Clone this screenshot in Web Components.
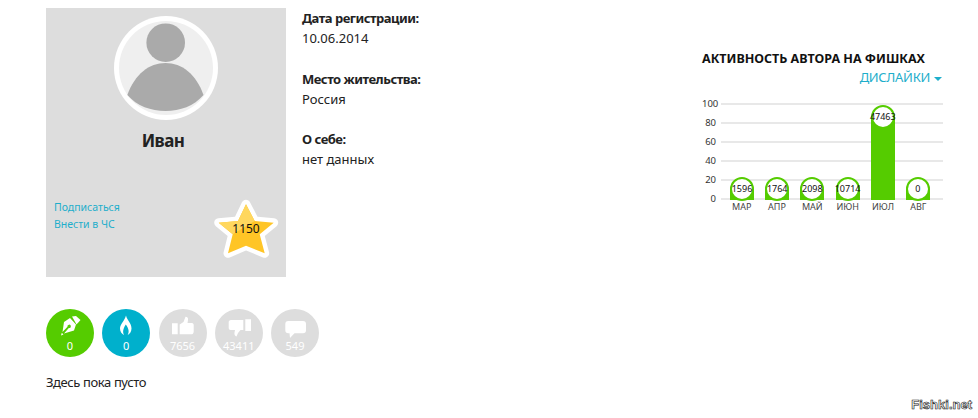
<!DOCTYPE html>
<html lang="ru">
<head>
<meta charset="utf-8">
<title>Профиль</title>
<style>
    html, body { margin: 0; padding: 0; background: #fff; }
    body { font-family: "Noto Sans", sans-serif; color: #222; }
</style>
</head>
<body>
<x-profile></x-profile>
<script>
class XCard extends HTMLElement {
    constructor() {
        super();
        this.attachShadow({mode: 'open'}).innerHTML = `
            <style>
                :host { display: flex; flex-direction: column; align-items: center; position: relative; box-sizing: border-box; width: 240px; height: 269px; background: #ddd; padding-top: 8px; }
                .avatar { display: block; width: 104px; height: 104px; }
                .name { font: 700 17px/24px "Noto Sans", sans-serif; letter-spacing: -0.6px; color: #222; margin: 9px 6px 0 0; }
                .links { align-self: flex-start; margin: 46px 0 0 8px; font-size: 10.500px; line-height: 17px; color: #1eaecb; }
                .links div { height: 17px; }
                .star { position: absolute; left: 169px; top: 190px; width: 64px; height: 62px; }
                .star svg { display: block; overflow: visible; }
                .star span { position: absolute; left: 0; right: 2px; top: 23px; text-align: center; font: 400 12px/15px "Noto Sans", sans-serif; color: #111; }
            </style>
            <svg class="avatar" viewBox="0 0 104 104">
                <circle cx="52" cy="52" r="52" fill="#fff"/>
                <circle cx="52" cy="52" r="47" fill="#efefef"/>
                <circle cx="51.7" cy="26.7" r="19.3" fill="#aaa"/>
                <path d="M13.300 79 C21 58 35 47 51.500 47 C68 47 82 58 89.500 79 C80 90 66 95 51.500 95 C37 95 23 90 13.300 79 Z" fill="#aaa"/>
            </svg>
            <div class="name"><slot name="name"></slot></div>
            <div class="links">
                <div>Подписаться</div>
                <div>Внести в ЧС</div>
            </div>
            <div class="star">
                <svg width="64" height="62" viewBox="0 0 64 62">
                    <path d="M31 6.300 L39.700 23 L58.700 24.700 L44.700 36.300 L49.700 55.300 L31 47.700 L13 55.300 L17.700 36.300 L3.700 24.700 L23 23 Z" fill="#fff" stroke="#fff" stroke-width="9" stroke-linejoin="round"/>
                    <path d="M31 6.300 L39.700 23 L58.700 24.700 L44.700 36.300 L49.700 55.300 L31 47.700 L13 55.300 L17.700 36.300 L3.700 24.700 L23 23 Z" fill="#ffc526"/>
                    <path d="M31 6.300 L39.700 23 L17.700 36.300 L3.700 24.700 L23 23 Z" fill="#ffd75e"/>
                </svg>
                <span><slot name="score"></slot></span>
            </div>
        `;
    }
}

class XDetails extends HTMLElement {
    constructor() {
        super();
        this.attachShadow({mode: 'open'}).innerHTML = `
            <style>
                :host { display: block; font-size: 13px; line-height: 20px; color: #222; }
                dl { margin: 0; padding: 0; display: flex; flex-direction: column; gap: 20.500px; }
                dt { font-weight: 700; letter-spacing: -0.5px; }
                dd { margin: 0; }
            </style>
            <dl>
                <div><dt>Дата регистрации:</dt><dd>10.06.2014</dd></div>
                <div><dt>Место жительства:</dt><dd>Россия</dd></div>
                <div><dt>О себе:</dt><dd>нет данных</dd></div>
            </dl>
        `;
    }
}

class XBar extends HTMLElement {
    constructor() {
        super();
        this.attachShadow({mode: 'open'}).innerHTML = `
            <style>
                :host { display: flex; flex-direction: column; align-items: center; justify-content: flex-end; position: relative; width: 24px; }
                .col { width: 24px; background: #55cc00; height: var(--h, 12px); }
                .ring { position: absolute; left: 0; top: calc(100% - var(--h, 12px) - 12px); box-sizing: border-box; width: 24px; height: 24px; border: 2.500px solid #55cc00; border-radius: 50%; background: #fff; display: flex; align-items: center; justify-content: center; font-size: 9px; line-height: 12px; color: #111; white-space: nowrap; }
                .ring span { flex: none; }
            </style>
            <div class="col"></div>
            <div class="ring"><span><slot></slot></span></div>
        `;
    }

    connectedCallback() {
        this.style.setProperty('--h', this.getAttribute('h') + 'px');
    }
}

class XChart extends HTMLElement {
    constructor() {
        super();
        const ticks = [100, 80, 60, 40, 20, 0].map(t => `<div class="tick"><span>${t}</span><i></i></div>`).join('');
        const months = ['МАР', 'АПР', 'МАЙ', 'ИЮН', 'ИЮЛ', 'АВГ'].map(m => `<span>${m}</span>`).join('');
        this.attachShadow({mode: 'open'}).innerHTML = `
            <style>
                :host { display: block; width: 241px; font-size: 13px; color: #222; }
                .title { font-weight: 700; font-size: 12.500px; line-height: 18px; color: #111; white-space: nowrap; }
                .filter { text-align: right; font-size: 13px; letter-spacing: -0.3px; line-height: 18px; color: #1eaecb; padding-right: 1px; }
                .filter i { display: inline-block; width: 0; height: 0; margin-left: 4px; vertical-align: middle; border: 4px solid transparent; border-top-color: #1eaecb; border-bottom: 0; }
                .plot { position: relative; margin-top: 17px; height: 97px; }
                .grid { display: flex; flex-direction: column; justify-content: space-between; height: 97px; }
                .tick { display: flex; align-items: center; height: 1px; font-size: 9.500px; line-height: 12px; color: #333; }
                .tick span { width: 14px; text-align: right; flex: none; }
                .tick i { flex: 1; height: 2px; margin-left: 5px; background: #e8e8e8; }
                .bars { position: absolute; left: 28px; top: 0; height: 97px; width: 200px; display: flex; justify-content: space-between; }
                .months { display: flex; justify-content: space-between; margin: 1px 0 0 22px; width: 212px; font-size: 9px; line-height: 12px; color: #444; }
                .months span { width: 36px; text-align: center; }
            </style>
            <div class="title">АКТИВНОСТЬ АВТОРА НА ФИШКАХ</div>
            <div class="filter">ДИСЛАЙКИ<i></i></div>
            <div class="plot">
                <div class="grid">${ticks}</div>
                <div class="bars"><slot></slot></div>
            </div>
            <div class="months">${months}</div>
        `;
    }
}

class XBadge extends HTMLElement {
    constructor() {
        super();
        this.attachShadow({mode: 'open'}).innerHTML = `
            <style>
                :host { display: flex; flex-direction: column; align-items: center; position: relative; box-sizing: border-box; width: 48px; height: 48px; border-radius: 50%; background: var(--bg, #ddd); color: #fff; padding-top: 6px; }
                ::slotted(svg) { display: block; width: 24px; height: 24px; fill: #fff; overflow: visible; }
                .n { font: 400 11px/14px "Noto Sans", sans-serif; }
            </style>
            <slot></slot>
            <div class="n"></div>
        `;
    }

    connectedCallback() {
        this.shadowRoot.querySelector('.n').textContent = this.getAttribute('n');
    }
}

class XProfile extends HTMLElement {
    constructor() {
        super();
        this.attachShadow({mode: 'open'}).innerHTML = `
            <style>
                :host { display: block; position: relative; box-sizing: border-box; width: 978px; height: 418px; padding: 8px 0 0 46px; overflow: hidden; }
                .top { display: flex; height: 269px; }
                x-details { margin-left: 16px; width: 400px; }
                x-chart { margin: 42px 0 0 0; }
                .badges { display: flex; gap: 8.250px; margin-top: 32px; }
                .empty { font-size: 13px; letter-spacing: -0.4px; line-height: 18px; color: #222; margin-top: 16px; }
                .mark { position: absolute; right: 6px; bottom: 6px; font: 700 13px/14px "Liberation Sans", sans-serif; color: #fff; -webkit-text-stroke: 0.6px #111; }
                #c { --bg: #55cc00; } #f { --bg: #00b0cc; }
            </style>
            <div class="top">
                <x-card>
                    <span slot="name">Иван</span>
                    <span slot="score">1150</span>
                </x-card>
                <x-details></x-details>
                <x-chart>
                    <x-bar h="11">1596</x-bar>
                    <x-bar h="11">1764</x-bar>
                    <x-bar h="11">2098</x-bar>
                    <x-bar h="11">10714</x-bar>
                    <x-bar h="83">47463</x-bar>
                    <x-bar h="11">0</x-bar>
                </x-chart>
            </div>
            <div class="badges">
                <x-badge id="c" n="0"><svg viewBox="0 0 24 24"><path d="M14 1.500 L18 1 L22.500 5 L18.500 9.500 Z"/><path fill-rule="evenodd" d="M12 3 L18 9.500 L16 15.500 L6 18.500 L10.800 13 A1.700 1.700 0 1 0 9.500 11.800 L4.500 17 L6 7 Z"/><path d="M3 20.500 L3.800 17.800 L5.500 19.400 Z"/></svg></x-badge>
                <x-badge id="f" n="0"><svg viewBox="0 0 24 24"><path d="M12 0.500 C13 5 17.500 8 17.500 13.500 C17.500 17 15.500 19 13.700 20 C15.300 17 15 14 11.800 9.500 C9 14 8.500 17 10 20 C8 19 6 17 6 13.500 C6 9.500 10.500 6 12 0.500 Z"/></svg></x-badge>
                <x-badge n="7656"><svg viewBox="0 0 24 24"><path d="M1 8.300 H6.700 V19.300 H1 Z M8.700 9.500 L12.500 7 L14.500 1.700 C16.500 1.700 17.500 3 17 5 L16.500 8 H21 C22 8 22.700 9 22.700 10 V16.500 C22.700 18.500 21.500 19.300 20 19.300 H8.700 Z"/></svg></x-badge>
                <x-badge n="43411"><svg viewBox="0 0 24 24"><path d="M18.300 4.300 H24 V16 H18.300 Z M4 5 H16.300 V15 H13.500 L11 18 L9.500 21.500 C8 21 7 19.500 7.500 17.500 L8 15 H3.500 C2.500 15 1.700 14 1.700 13 V7 C1.700 6 2.500 5 4 5 Z"/></svg></x-badge>
                <x-badge n="549"><svg viewBox="0 0 24 24"><path d="M5.300 6 H20 C22 6 23 7 23 9 V15.300 C23 17.300 22 18.300 20 18.300 H11.500 L7 23 L6.500 18.300 H5.300 C3.300 18.300 2.300 17.300 2.300 15.300 V9 C2.300 7 3.300 6 5.300 6 Z"/></svg></x-badge>
            </div>
            <div class="empty">Здесь пока пусто</div>
            <div class="mark">Fishki.net</div>
        `;
    }
}

customElements.define('x-card', XCard);
customElements.define('x-details', XDetails);
customElements.define('x-bar', XBar);
customElements.define('x-chart', XChart);
customElements.define('x-badge', XBadge);
customElements.define('x-profile', XProfile);
</script>
</body>
</html>
